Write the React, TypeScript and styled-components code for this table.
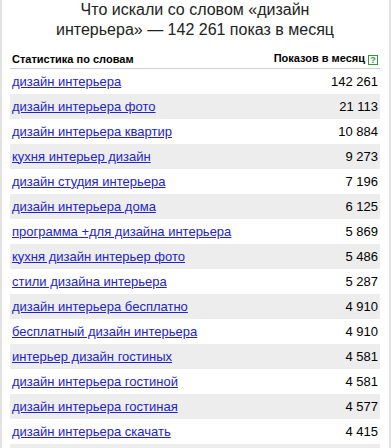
import styled, {createGlobalStyle} from "styled-components";

const GlobalStyle = createGlobalStyle`
	html,
	body {
		margin: 0;
		padding: 0;
		background: #fff;
	}
	body {
		font-family: "Liberation Sans", Arial, sans-serif;
	}
`;

const Panel = styled.div`
	box-sizing: border-box;
	width: 391px;
	height: 448px;
	overflow: hidden;
	border-left: 2px solid #e2e2e2;
	border-right: 2px solid #e2e2e2;
	padding: 0 9px 0 8px;
	background: #fff;
`;

const Title = styled.h2`
	margin: 0;
	padding: 0 40px;
	font-size: 16px;
	line-height: 20px;
	font-weight: normal;
	color: #222;
	text-align: center;
`;

const Table = styled.table`
	width: 100%;
	margin-top: 4px;
	border-collapse: collapse;
	font-size: 13px;
`;

const HeadCell = styled.th<{$right?: boolean}>`
	height: 21px;
	padding: 0 2px 3px;
	vertical-align: bottom;
	font-size: 11px;
	font-weight: bold;
	color: #000;
	text-align: ${(p) => (p.$right ? "right" : "left")};
	border-bottom: 1px solid #cfcfd8;
	white-space: nowrap;
`;

const Help = styled.span`
	display: inline-block;
	box-sizing: border-box;
	width: 10px;
	height: 10px;
	margin-left: 3px;
	border: 1px solid #399539;
	color: #399539;
	font-size: 9px;
	line-height: 8px;
	font-weight: bold;
	text-align: center;
	vertical-align: -1px;
`;

const Row = styled.tr<{$odd: boolean}>`
	height: 25px;
	background: ${(p) => (p.$odd ? "#ededed" : "#fff")};
`;

const Cell = styled.td<{$right?: boolean}>`
	padding: 0 2px;
	text-align: ${(p) => (p.$right ? "right" : "left")};
	color: #000;
	white-space: nowrap;
`;

const Phrase = styled.a`
	color: #2323cc;
	text-decoration: underline;
`;

const rows: [string, string][] = [
	["дизайн интерьера", "142 261"],
	["дизайн интерьера фото", "21 113"],
	["дизайн интерьера квартир", "10 884"],
	["кухня интерьер дизайн", "9 273"],
	["дизайн студия интерьера", "7 196"],
	["дизайн интерьера дома", "6 125"],
	["программа +для дизайна интерьера", "5 869"],
	["кухня дизайн интерьер фото", "5 486"],
	["стили дизайна интерьера", "5 287"],
	["дизайн интерьера бесплатно", "4 910"],
	["бесплатный дизайн интерьера", "4 910"],
	["интерьер дизайн гостиных", "4 581"],
	["дизайн интерьера гостиной", "4 581"],
	["дизайн интерьера гостиная", "4 577"],
	["дизайн интерьера скачать", "4 415"],
];

export default function App() {
	return (
		<>
			<GlobalStyle />
			<Panel>
				<Title>Что искали со словом «дизайн интерьера» — 142 261 показ в месяц</Title>
				<Table>
					<thead>
						<tr>
							<HeadCell>Статистика по словам</HeadCell>
							<HeadCell $right>
								Показов в месяц
								<Help>?</Help>
							</HeadCell>
						</tr>
					</thead>
					<tbody>
						{rows.map(([phrase, count], i) => (
							<Row key={phrase} $odd={i % 2 === 1}>
								<Cell>
									<Phrase href="#">{phrase}</Phrase>
								</Cell>
								<Cell $right>{count.replace(" ", "\u00a0")}</Cell>
							</Row>
						))}
						{/* next striped row, only its top edge is in view */}
						<Row $odd>
							<Cell />
							<Cell />
						</Row>
					</tbody>
				</Table>
			</Panel>
		</>
	);
}
